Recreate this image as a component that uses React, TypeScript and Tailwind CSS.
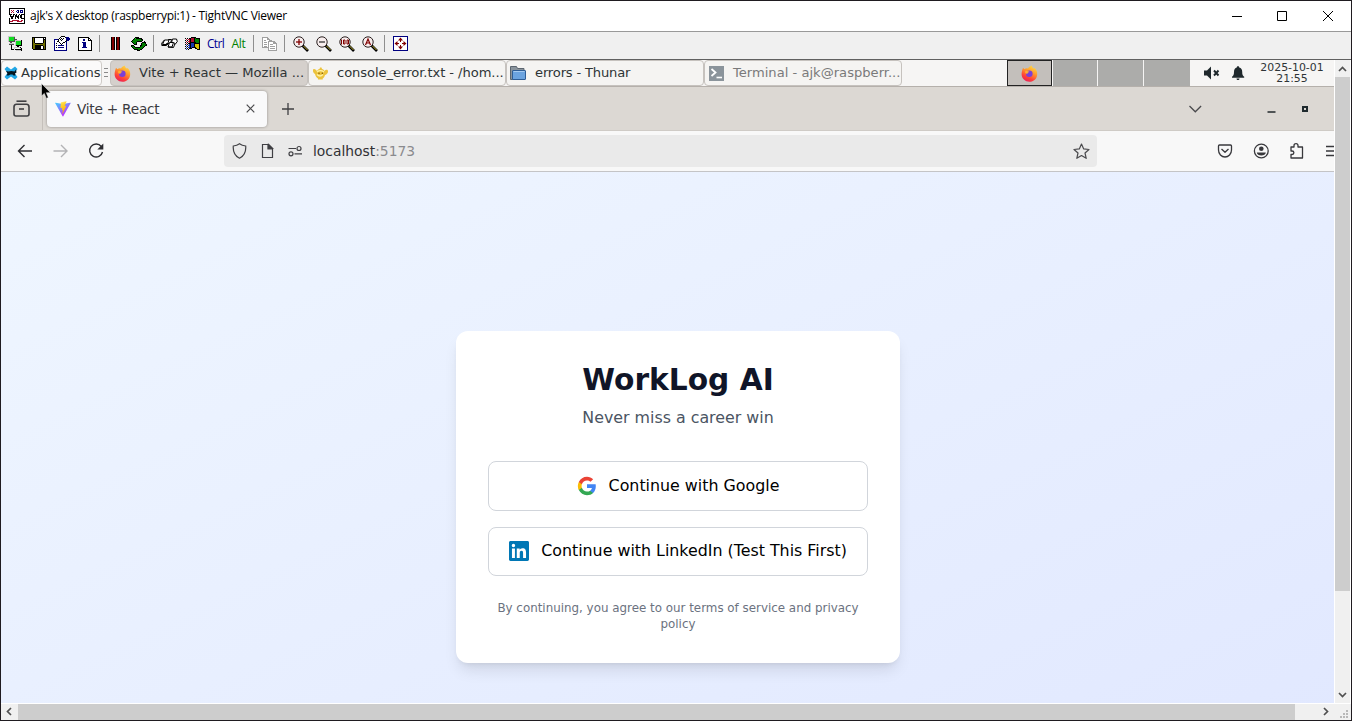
import React from "react";

const UI = "font-['DejaVu_Sans',sans-serif]";

function Pixels({ rows, colors }: { rows: string[]; colors: Record<string, string> }) {
  const w = Math.max(...rows.map((r) => r.length));
  return (
    <svg width={w} height={rows.length} viewBox={`0 0 ${w} ${rows.length}`} shapeRendering="crispEdges" className="shrink-0">
      {rows.flatMap((row, y) =>
        row.split("").map((c, x) =>
          colors[c] ? <rect key={`${x}-${y}`} x={x} y={y} width="1" height="1" fill={colors[c]} /> : null,
        ),
      )}
    </svg>
  );
}

const PAL: Record<string, string> = {
  k: "#000000", w: "#ffffff", g: "#10dc20", G: "#008000", n: "#000080", r: "#800000", R: "#b01030",
  o: "#707000", s: "#a0a0a0", b: "#1838b0", y: "#d8c000", l: "#c8c8c8", d: "#505050",
};

const NEW_CONN = [
  "lllllll........",
  "lgggggd........",
  "lgggggd........",
  "lgggggddd......",
  "lgggggdllllllk.",
  "lddddddlgggggk.",
  "..dd...lgggggk.",
  ".lllll.lgggggk.",
  ".ddddd.lgggggk.",
  "...k...lkkkkkk.",
  "...k.....kk....",
  "...k..llllllk..",
  "...k..lwwwwwlk.",
  "...kkk.kkkkkkk.",
  "........lllllk.",
];
const SAVE = [
  "kkkkkkkkkkkkkk",
  "kokwwwwwwwwkwk",
  "kokwwwwwwwwkkk",
  "kokwwwwwwwwkok",
  "kokwwwwwwwwkok",
  "kokwwwwwwwwkok",
  "kookkkkkkkkook",
  "kooooooooooook",
  "kookkkkkkkkook",
  "kookkkkkkwwkok",
  "kookkkkkkwwkok",
  "kookkkkkkwwkok",
  ".kkkkkkkkkkkkk",
];
const OPTIONS = [
  ".......kkkk.....",
  "......kwwwwknnn.",
  ".....kwkwkwwnnnn",
  "nnnnkwkwkwwwnnnn",
  "nwwwkwwkwwwwknn.",
  "nwwkkwwwwwwkn...",
  "nwwwwkwwwkkwn...",
  "nwkwwwkwkwwwn...",
  "nwwwwwwkwwwwn...",
  "nwkwnnnnnnwwn...",
  "nwwwwwwwwwwwn...",
  "nwkwnnnnnnwwn...",
  "nwwwwwwwwwwwn...",
  "nwwwwwwwwwwwn...",
  "nnnnnnnnnnnnn...",
];
const INFO = [
  "kkkkkkkkkkk...",
  "kwwwwwwwwwkk..",
  "kwwwwnnwwwkwk.",
  "kwwwwnnwwwkkkk",
  "kwwwwwwwwwwwwk",
  "kwwwnnnnwwwwwk",
  "kwwwwnnnwwwwwk",
  "kwwwwnnnwwwwwk",
  "kwwwwnnnwwwwwk",
  "kwwwwnnnwwwwwk",
  "kwwwnnnnnwwwwk",
  "kwwwwwwwwwwwwk",
  "kwwwwwwwwwwwwk",
  "kkkkkkkkkkkkkk",
];
const PAUSE = Array(13).fill("krrk.krrk");
const REFRESH = [
  "....kkkk........",
  "...kgkkkkkk.....",
  "..kGGGGGGGkk....",
  ".kGGGGGGGGGk....",
  "kGGGGGkkkkk..k..",
  ".kGGGk.....kkkk.",
  "..kGGk....kGGGk.",
  "...kkk....kGGGGk",
  "kkk......kkGGGkk",
  "kGGk.....kGGGk..",
  ".kGGkkkkkGGGk...",
  "..kGGGGGGGGk....",
  "...kkkkGGkk.....",
  "......kkk.......",
];
const WIN = [
  "......kkkkk.....",
  "k.k.kkRRRkGkkkk.",
  ".R.RRkRRRkGGGGk.",
  "k.k.RkRRRkGGGGk.",
  ".R.RRkRRRkGGGGk.",
  "k.k.RkkkkkkGGGk.",
  ".R.kkkbbbkkkkkk.",
  "k.k.bkbbbkyyyyk.",
  ".b.bbkbbbkyyyyk.",
  "k.k.bkbbbkyyyyk.",
  ".b.bbkbkkkkyyyk.",
  "k.k.kkk...kkyyk.",
  ".b.k........kkk.",
];
const COPY = [
  "ssssss..........",
  "swwwwss.........",
  "swwwwsss........",
  "swsswwwsss......",
  "swwwwwsssssss...",
  "swssswswwwwsss..",
  "swwwwwswwwwssss.",
  "swssswswssswwws.",
  "swwwwwswwwwwwws.",
  "swssswswsssssws.",
  "ssssssswwwwwwws.",
  "......swsssssws.",
  "......swwwwwwws.",
  "......sssssssss.",
];
const VNC = [
  "kkkkkkkkkkkkkkkk",
  "kwwwwwwwwwwwwwwk",
  "kwRwRwwwnnwnnnwk",
  "kwwRwwwnwkwnwnwk",
  "kwRwRwwwnnwnnnwk",
  "kwwwwwwwwwwwwwwk",
  "kkkwkkwkwwkwkkkk",
  "wkwwkwkkwkwkkwwk",
  "wkkkkwkkkkwkkwwk",
  "wwkkwwkwkkwkkwwk",
  "kwkkwwkwwkwwkkkk",
  "kwwwwwwwwwwwwwwk",
  "kwwRRRRRRRwwRRwk",
  "kRRRwwwwRRRRRwwk",
  "kwwwwwwwwwwwwwwk",
  "kkkkkkkkkkkkkkkk",
];

function Mag({ kind }: { kind: "plus" | "minus" | "full" | "auto" }) {
  return (
    <svg width="16" height="16" viewBox="0 0 16 16" className="shrink-0">
      <path d="M9.500 9.500 15 15" stroke="#000" strokeWidth="2.600" />
      <path d="M10.500 10 14.500 14" stroke="#d8c840" strokeWidth="0.900" />
      <circle cx="6" cy="6" r="5.200" fill="#f8eeee" stroke="#2a2020" strokeWidth="1" />
      <g stroke="#800000" fill="none" strokeWidth="1">
        {(kind === "plus" || kind === "minus") && <path d="M3 6h6" strokeWidth="1.300" stroke={kind === "minus" ? "#333" : "#800000"} />}
        {kind === "plus" && <path d="M6 3v6" strokeWidth="1.300" />}
        {kind === "full" && <path d="M2.500 3.500v5M4.500 4h1.500v4H4.500zM8 4h1.500v4H8z" />}
        {kind === "auto" && <path d="M3.500 9 6 3l2.500 6M4.300 7h3.400" strokeWidth="1.200" />}
      </g>
    </svg>
  );
}

function Cell({ children }: { children: React.ReactNode }) {
  return <div className="flex h-full w-[23px] shrink-0 items-center justify-center">{children}</div>;
}
function Sep() {
  return (
    <div className="flex h-full w-2 shrink-0 items-center pl-[3px]">
      <div className="h-[17px] w-px bg-[#8f8f8f]" />
    </div>
  );
}

function Firefox() {
  return (
    <svg width="17" height="17" viewBox="0 0 17 17" className="shrink-0">
      <defs>
        <linearGradient id="ff" x1="0.8" y1="0" x2="0.3" y2="1">
          <stop offset="0" stopColor="#ffe14a" />
          <stop offset="0.4" stopColor="#ff9a2a" />
          <stop offset="0.75" stopColor="#ff4038" />
          <stop offset="1" stopColor="#e8205a" />
        </linearGradient>
      </defs>
      <path d="M1.200 5.200 2 2.800l1.500 1.500C4.500 3 6 3 7 3.600 8 1.800 9.500 1 10.800.6c0 1.600 1.200 2.400 2.300 3.200l.3-1C15.500 4.700 16.300 7 16.200 9.400 16 13.600 12.700 16.700 8.500 16.700S.6 13.500.6 9.200C.6 7.700.8 6.400 1.200 5.200Z" fill="url(#ff)" />
      <circle cx="8.300" cy="8.800" r="3.300" fill="#7b3fd6" />
      <path d="M4 6.500c1.700-.9 3.300-.4 4.600.6-1.500.1-2 .8-2.100 1.600-1.500.4-2.500-.6-2.500-2.200Z" fill="#ffb02e" />
    </svg>
  );
}

function Task({ icon, label, cls, text }: { icon: React.ReactNode; label: string; cls: string; text?: string }) {
  return (
    <div className={`flex h-[26px] shrink-0 items-center rounded-[4px] border border-[#c6c2be] pl-[2px] ${cls}`}>
      <div className="flex w-[18px] shrink-0 justify-center">{icon}</div>
      <span className={`ml-2 whitespace-nowrap text-[13.100px] leading-[24px] ${text ?? ""}`}>{label}</span>
    </div>
  );
}

function Titlebar() {
  return (
    <div className="flex h-[30px] shrink-0 items-center bg-white pl-2">
      <Pixels rows={VNC} colors={PAL} />
      <span className="ml-[5px] whitespace-nowrap font-['Open_Sans',sans-serif] text-[12px] tracking-[-0.270px] text-black">
        ajk's X desktop (raspberrypi:1) - TightVNC Viewer
      </span>
      <svg className="ml-auto mr-[18px]" width="102" height="12" viewBox="0 0 102 12" fill="none" stroke="#000">
        <path d="M1 6.500h10M46.500 1.500h9v9h-9z" />
        <path d="M92 1l10 10M102 1l-10 10" />
      </svg>
    </div>
  );
}

function Toolbar() {
  return (
    <div className="flex h-[27px] shrink-0 items-center bg-[#f0f0f0] pb-1 pl-[3px]">
      <Cell><Pixels rows={NEW_CONN} colors={PAL} /></Cell>
      <Cell><Pixels rows={SAVE} colors={PAL} /></Cell>
      <Cell><Pixels rows={OPTIONS} colors={PAL} /></Cell>
      <Cell><Pixels rows={INFO} colors={PAL} /></Cell>
      <Sep />
      <Cell><Pixels rows={PAUSE} colors={PAL} /></Cell>
      <Cell><Pixels rows={REFRESH} colors={PAL} /></Cell>
      <Sep />
      <Cell>
        <svg width="17" height="11" viewBox="0 0 17 11" className="shrink-0" fill="#fff" stroke="#000" strokeWidth="1" strokeLinejoin="round">
          <path d="M7.500 1.500h3L9.500 5.500h-4zM11.500 1h4l.8 2.500-2.300 3h-4z" />
          <path d="M3.500 2h4.500L6.500 6.500h-5zM.8 5l2.700-3M.8 5v2.500h4.700l2-2.500" />
          <path d="M8.500 4.500h4l-1.500 4.500H7zM12.500 4.500l1.500 1-1.500 4-5.500-.5" />
        </svg>
      </Cell>
      <Cell><Pixels rows={WIN} colors={PAL} /></Cell>
      <Cell><span className="font-['Open_Sans',sans-serif] text-[12px] leading-[16px] tracking-[-0.650px] text-[#000090]">Ctrl</span></Cell>
      <Cell><span className="font-['Open_Sans',sans-serif] text-[12px] leading-[16px] tracking-[-0.300px] text-[#008000]">Alt</span></Cell>
      <Sep />
      <Cell><Pixels rows={COPY} colors={PAL} /></Cell>
      <Sep />
      <Cell><Mag kind="plus" /></Cell>
      <Cell><Mag kind="minus" /></Cell>
      <Cell><Mag kind="full" /></Cell>
      <Cell><Mag kind="auto" /></Cell>
      <Sep />
      <Cell>
        <svg width="15" height="15" viewBox="0 0 15 15" className="shrink-0">
          <rect x="0.500" y="0.500" width="14" height="14" fill="#fff" stroke="#000080" />
          <path d="M7.500 1.500 10 4.500H5zM7.500 13.500 10 10.500H5zM1.500 7.500 4.500 5v5zM13.500 7.500 10.500 5v5z" fill="#800000" />
          <path d="M7.500 4v2M7.500 9v2M4 7.500h2M9 7.500h2" stroke="#800000" />
        </svg>
      </Cell>
    </div>
  );
}

function Panel() {
  return (
    <div className="flex h-[26px] shrink-0 items-center bg-[#f6f5f4] text-[#2e3436]">
      <div className="flex h-[26px] w-[101px] shrink-0 items-center rounded-[4px] border border-[#cfcbc7] bg-[#fbfafa] pl-[2px]">
        <svg width="14" height="14" viewBox="0 0 14 14" className="shrink-0">
          <path d="M.5 3 3 .5 7 3.500 11 .5 13.500 3 10.500 7l3 4-2.500 2.500-4-3-4 3L.5 11l3-4z" fill="#22a7e6" />
          <path d="M2 5l2.500.500C6.500 4.500 9 5 10.500 5.500L12 3.500l.5 3-1.500 1 .5 2H9.500L8.500 8.500H6.500L4.500 9.500H2.500L3.500 7.500z" fill="#06161f" />
        </svg>
        <span className="ml-[3px] whitespace-nowrap text-[13.100px] tracking-[-0.040px]">Applications</span>
      </div>
      <svg width="8" height="26" viewBox="0 0 8 26" className="shrink-0" stroke="#8a8a8a">
        <path d="M2 8.500h4M2 12.500h4M2 16.500h4" />
      </svg>
      <Task icon={<Firefox />} label="Vite + React — Mozilla ..." cls="w-[198px] bg-[#d5d0cc]" text="tracking-[0.010px]" />
      <Task
        icon={
          <svg width="17" height="16" viewBox="0 0 17 16">
            <path d="M1 5c0-1 1.500-1.500 2.500-.5L5 6c.8-1.200 1.500-1.700 2.500-1.900L8 2.500h1.500l.5 1.600c1.200.2 2 .9 2.600 1.900.7-1.500 3.200-2 3.400 0 .2 2-1.200 3.500-3 4-.5 2-1.300 3-2.300 3.500v1H6v-1c-1.500-1-2.500-2.500-3-4.500C1.500 8 .7 6.500 1 5Z" fill="#ecc33c" />
            <path d="M5 7c2-1.500 5-1.500 7 0M5 9.500c2 2 4 2 6 0" stroke="#fff3a8" strokeWidth="1.200" fill="none" />
            <circle cx="7" cy="8.300" r="0.700" fill="#7a5200" />
            <circle cx="10.300" cy="8.300" r="0.700" fill="#7a5200" />
          </svg>
        }
        label="console_error.txt - /hom..."
        cls="w-[198px] bg-[#f5f4f2]"
        text="tracking-[-0.060px]"
      />
      <Task
        icon={
          <svg width="17" height="16" viewBox="0 0 17 16">
            <path d="M.5 14.500v-13h6l1 2H14v11z" fill="#8a949c" stroke="#5c6670" />
            <rect x="2.500" y="5.500" width="13" height="9" rx="0.500" fill="#6ba3df" stroke="#2e5d96" />
            <path d="M3.500 6.500h11" stroke="#a5caf0" />
          </svg>
        }
        label="errors - Thunar"
        cls="w-[198px] bg-[#f5f4f2]"
        text="tracking-[-0.170px]"
      />
      <Task
        icon={
          <svg width="15" height="15" viewBox="0 0 15 15">
            <rect width="15" height="15" fill="#8b949b" />
            <path d="M2.500 3 6.500 6.500l-4 3.500" stroke="#fff" strokeWidth="1.800" fill="none" />
            <path d="M7.500 11.500H13" stroke="#fff" strokeWidth="1.600" />
          </svg>
        }
        label="Terminal - ajk@raspberr..."
        cls="w-[198px] bg-[#f5f4f2] text-[#7a7a7a]"
      />
      <div className="ml-auto flex h-[26px] shrink-0 gap-px">
        <div className="flex w-[45px] items-center justify-center border border-[#222] bg-[#c3bfbb] pr-px"><Firefox /></div>
        <div className="w-[44px] bg-[#acacaa]" />
        <div className="w-[45px] bg-[#acacaa]" />
        <div className="w-[46px] bg-[#acacaa]" />
      </div>
      <svg className="ml-[14px] shrink-0" width="42" height="16" viewBox="0 0 42 16">
        <path d="M0 5.500h3L7 1.500v13L3 10.500h-3z" fill="#1f282c" />
        <path d="M10 5.500l4.500 5M14.500 5.500l-4.500 5" stroke="#1f282c" strokeWidth="1.900" />
        <path d="M34 1.200c.8 0 1.200.5 1.200 1.200 2 .6 3 2.100 3 4.400 0 3 .6 4.200 2 5v1H28v-1c1.400-.8 2-2 2-5 0-2.300 1-3.800 2.800-4.400 0-.7.4-1.200 1.200-1.200ZM32.500 13.500h3c0 2-3 2-3 0Z" fill="#1f282c" />
      </svg>
      <div className="mr-[9px] ml-[13px] flex w-[66px] shrink-0 flex-col items-center whitespace-nowrap text-[10.900px] leading-[11px]">
        <span>2025-10-01</span>
        <span>21:55</span>
      </div>
    </div>
  );
}

function ViteLogo() {
  return (
    <svg width="16" height="16" viewBox="0 0 16 16" className="shrink-0">
      <defs>
        <linearGradient id="va" x1="0" y1="0" x2="0.600" y2="0.900"><stop offset="0" stopColor="#41d1ff" /><stop offset="1" stopColor="#bd34fe" /></linearGradient>
        <linearGradient id="vb" x1="0.400" y1="0" x2="0.600" y2="0.900"><stop offset="0" stopColor="#ffea83" /><stop offset="0.200" stopColor="#ffd83a" /><stop offset="1" stopColor="#ffa800" /></linearGradient>
      </defs>
      <path d="M15.600 2.300 8.300 15.300a.4.4 0 0 1-.7 0L.2 2.300a.4.4 0 0 1 .4-.6l7.300 1.300 7.300-1.300a.4.4 0 0 1 .4.6Z" fill="url(#va)" />
      <path d="M11.300.2 6 1.300a.2.2 0 0 0-.2.200l-.3 5.500a.2.2 0 0 0 .3.200l1.500-.3-.5 2.100.2.300 1-.3-.7 3.400c0 .3.300.4.400.200L11.300 5a.2.2 0 0 0-.2-.3l-1.500.3L11.600.4a.2.2 0 0 0-.3-.2Z" fill="url(#vb)" />
    </svg>
  );
}

function TabStrip() {
  return (
    <div className="flex h-11 shrink-0 items-center border-b border-[#cfcbc6] bg-[#dcd8d3] text-[#3b3b3f]">
      <div className="flex h-full w-[42px] shrink-0 items-center justify-center border-r border-[#c5c0bb] pr-px">
        <svg width="17" height="17" viewBox="0 0 17 17" fill="none" stroke="#3f3f42" strokeWidth="1.600">
          <path d="M3.500 1.200h10" />
          <path d="M1 7c0-1.700.8-2.700 2.500-2.700h10C15.200 4.300 16 5.300 16 7v7c0 1.300-.7 2-2 2H3c-1.300 0-2-.7-2-2z" />
          <path d="M6 9h5" />
        </svg>
      </div>
      <div className="ml-1 flex h-[36px] w-[220px] shrink-0 items-center rounded-[4px] bg-[#f9f9fa] pl-2 shadow-[0_0_3px_rgba(0,0,0,0.35)]">
        <ViteLogo />
        <span className="ml-[6px] whitespace-nowrap pt-px text-[13.700px] tracking-[-0.250px]">Vite + React</span>
        <svg className="ml-auto mr-3" width="9" height="9" viewBox="0 0 9 9" stroke="#4a4a4d" strokeWidth="1.200"><path d="M.7.700l7.600 7.600M8.300.700.7 8.300" /></svg>
      </div>
      <svg className="ml-[15px] mt-px" width="12" height="12" viewBox="0 0 12 12" stroke="#3f3f42" strokeWidth="1.300"><path d="M0 6h12M6 0v12" /></svg>
      <svg className="ml-auto mr-[25px]" width="120" height="12" viewBox="0 0 120 12" fill="none">
        <path d="M.5 3 6.300 8.800 12.100 3" stroke="#4a4a4d" strokeWidth="1.300" />
        <path d="M78.500 9h8" stroke="#2e3436" strokeWidth="1.600" />
        <rect x="114" y="4" width="4" height="4" stroke="#1f2a2e" strokeWidth="2" />
      </svg>
    </div>
  );
}

function NavBar() {
  return (
    <div className="flex h-[41px] shrink-0 items-center border-b border-[#c4c4c6] bg-[#f8f8f8]">
      <svg className="ml-4 shrink-0" width="88" height="18" viewBox="0 0 88 18" fill="none" strokeWidth="1.400">
        <path d="M15 9H1.500M7.500 3 1.500 9l6 6" stroke="#2f2f33" />
        <path d="M36.500 9H50M44 3l6 6-6 6" stroke="#b3b3b5" />
        <path d="M84.300 4.500A6.500 6.500 0 1 0 85.500 10" stroke="#2f2f33" />
        <path d="M86.300 1.500v6h-6z" fill="#2f2f33" />
      </svg>
      <div className="ml-[119px] flex h-8 w-[873px] shrink-0 items-center rounded-[4px] bg-[#eaeaea] pl-2">
        <svg width="72" height="16" viewBox="0 0 72 16" fill="none" stroke="#404044" strokeWidth="1.200">
          <path d="M7.500.8c2 1.500 4 2 6.200 2.200C14.200 9 12 13 7.500 15.200 3 13 .8 9 1.300 3 3.500 2.800 5.500 2.300 7.500.8Z" />
          <path d="M30.500 1.500h6l4 4v9h-10zM36 1.500V6h4.500" />
          <path d="M36.500 1.500v4h4z" fill="#404044" />
          <path d="M56.500 5.500H64M62.500 10.800H70" />
          <circle cx="67" cy="5.500" r="2" />
          <circle cx="59" cy="10.800" r="2" />
        </svg>
        <span className="ml-[9px] whitespace-nowrap text-[13.850px] text-[#303034]">
          localhost<span className="text-[#8a8a8e]">:5173</span>
        </span>
        <svg className="ml-auto mr-[7px]" width="17" height="17" viewBox="0 0 17 17" fill="none" stroke="#4a4a4d" strokeWidth="1.200" strokeLinejoin="round">
          <path d="m8.500 1 2.200 4.900 5.300.6-4 3.500 1.200 5.300-4.700-2.800-4.700 2.800L5 10 1 6.500l5.300-.6z" />
        </svg>
      </div>
      <svg className="ml-auto shrink-0" width="117" height="18" viewBox="0 0 117 18" fill="none" stroke="#38383c" strokeWidth="1.300">
        <path d="M2.500 3h11c.6 0 1 .4 1 1v4c0 4-3 7-6.500 7s-6.500-3-6.500-7V4c0-.6.4-1 1-1ZM4.500 7 8 10.300 11.500 7" strokeLinejoin="round" />
        <circle cx="44.300" cy="9" r="6.900" />
        <circle cx="44.300" cy="6.800" r="2.300" fill="#38383c" stroke="none" />
        <path d="M39.800 10.500h9c0 4-9 4-9 0Z" fill="#38383c" stroke="none" />
        <path d="M74 5h3V3.500c0-2.500 4-2.500 4 0V5h4.500v11H74v-3.500h1c2.500 0 2.500-3.500 0-3.500h-1z" strokeLinejoin="round" />
        <path d="M109 4.500h8M109 9h8M109 13.500h8" />
      </svg>
    </div>
  );
}

function GoogleG() {
  return (
    <svg width="20" height="20" viewBox="0 0 24 24" className="shrink-0">
      <path fill="#4285F4" d="M22.560 12.250c0-.78-.07-1.530-.2-2.250H12v4.260h5.920c-.26 1.370-1.040 2.530-2.210 3.310v2.770h3.570c2.080-1.920 3.280-4.740 3.280-8.090z" />
      <path fill="#34A853" d="M12 23c2.970 0 5.460-.98 7.280-2.660l-3.570-2.770c-.98.660-2.230 1.060-3.710 1.060-2.860 0-5.290-1.930-6.160-4.530H2.180v2.840C3.990 20.530 7.700 23 12 23z" />
      <path fill="#FBBC05" d="M5.840 14.090c-.22-.66-.35-1.360-.35-2.090s.13-1.430.35-2.090V7.070H2.180C1.430 8.550 1 10.220 1 12s.43 3.450 1.180 4.930l2.850-2.220.81-.62z" />
      <path fill="#EA4335" d="M12 5.380c1.620 0 3.060.56 4.210 1.640l3.150-3.150C17.450 2.090 14.970 1 12 1 7.700 1 3.990 3.470 2.180 7.070l3.660 2.840c.87-2.600 3.300-4.530 6.160-4.530z" />
    </svg>
  );
}

function LinkedIn() {
  return (
    <svg width="20" height="20" viewBox="0 0 24 24" className="shrink-0">
      <path fill="#0077B5" d="M20.447 20.452h-3.554v-5.569c0-1.328-.027-3.037-1.852-3.037-1.853 0-2.136 1.445-2.136 2.939v5.667H9.351V9h3.414v1.561h.046c.477-.9 1.637-1.850 3.370-1.850 3.601 0 4.267 2.370 4.267 5.455v6.286zM5.337 7.433a2.062 2.062 0 0 1-2.063-2.065 2.064 2.064 0 1 1 2.063 2.065zm1.782 13.019H3.555V9h3.564v11.452zM22.225 0H1.771C.792 0 0 .774 0 1.729v20.542C0 23.227.792 24 1.771 24h20.451C23.200 24 24 23.227 24 22.271V1.729C24 .774 23.200 0 22.222 0h.003z" />
    </svg>
  );
}

function LoginPage() {
  return (
    <div className="min-h-0 flex-1 overflow-hidden">
      <div className="flex h-[650px] w-[1354px] items-center justify-center bg-linear-to-br/srgb from-[#eff6ff] to-[#e0e7ff]">
        <div className="flex h-[332px] w-[443.500px] flex-col rounded-[12px] bg-white px-[31.500px] pt-[31px] text-center shadow-lg">
          <h1 className="text-[29.700px] leading-[35px] font-bold text-[#101528]">WorkLog AI</h1>
          <p className="mt-[9px] text-[15.850px] leading-[24px] text-[#4b5563]">Never miss a career win</p>
          <div className="mt-[31px] flex flex-col gap-4">
            <button className="flex h-[49.500px] items-center justify-center gap-3 rounded-[8px] border border-[#d1d5db] bg-white text-[15.850px] text-black">
              <GoogleG />
              <span>Continue with Google</span>
            </button>
            <button className="flex h-[49.500px] items-center justify-center gap-3 rounded-[8px] border border-[#d1d5db] bg-white text-[15.850px] whitespace-nowrap text-black">
              <LinkedIn />
              <span>Continue with LinkedIn (Test This First)</span>
            </button>
          </div>
          <p className="mt-6 text-[11.880px] leading-[16px] text-[#6b7280]">
            By continuing, you agree to our terms of service and privacy policy
          </p>
        </div>
      </div>
    </div>
  );
}

const CHEV = "block shrink-0";

export default function App() {
  return (
    <div className={`relative flex h-[721px] w-[1352px] flex-col overflow-hidden border border-[#1f1b20] bg-[#f0f0f0] ${UI}`}>
      <Titlebar />
      <div className="h-px shrink-0 bg-[#999999]" />
      <Toolbar />
      <div className="h-px shrink-0 bg-[#606060]" />
      <div className="flex min-h-0 flex-1">
        <div className="flex w-[1333px] shrink-0 flex-col overflow-hidden">
          <Panel />
          <div className="h-px shrink-0 bg-[#b5b0ab]" />
          <TabStrip />
          <NavBar />
          <LoginPage />
        </div>
        <div className="flex w-[17px] shrink-0 flex-col border-x border-white bg-[#f0f0f0]">
          <svg className={CHEV} width="15" height="17" viewBox="0 0 15 17" fill="none" stroke="#505050" strokeWidth="1.700"><path d="M4 11 7.500 7.500 11 11" /></svg>
          <div className="h-[514px] bg-[#cdcdcd]" />
          <svg className={`${CHEV} mt-auto`} width="15" height="17" viewBox="0 0 15 17" fill="none" stroke="#505050" strokeWidth="1.700"><path d="M4 7 7.500 10.500 11 7" /></svg>
        </div>
      </div>
      <div className="flex h-[17px] shrink-0 border-t border-white bg-[#f0f0f0]">
        <svg className={CHEV} width="17" height="16" viewBox="0 0 17 16" fill="none" stroke="#505050" strokeWidth="1.700"><path d="M10 4 6.500 7.500 10 11" /></svg>
        <div className="w-[1277px] bg-[#cdcdcd]" />
        <div className="flex-1" />
        <svg className={CHEV} width="17" height="16" viewBox="0 0 17 16" fill="none" stroke="#505050" strokeWidth="1.700"><path d="M7 4 10.500 7.500 7 11" /></svg>
        <svg className={CHEV} width="17" height="16" viewBox="0 0 17 16" fill="#b8b8b8"><path d="M12 6h2v2h-2zM9 9h2v2H9zM12 9h2v2h-2zM6 12h2v2H6zM9 12h2v2H9zM12 12h2v2h-2z" /></svg>
      </div>
      <svg className="absolute top-[82px] left-[40px]" width="10" height="17" viewBox="0 0 10 17">
        <path d="M.5.500v12.500l2.800-2.600 2 5 2-.9-2-4.800H9.500z" fill="#000" stroke="#fff" strokeWidth="0.500" />
      </svg>
    </div>
  );
}
